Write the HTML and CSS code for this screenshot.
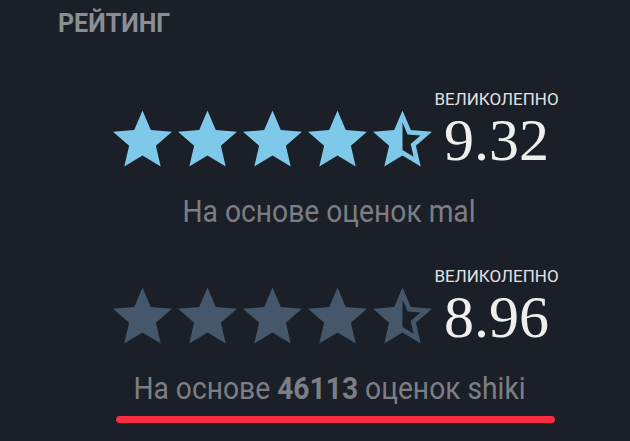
FILE: index.html
```html
<!DOCTYPE html>
<html lang="ru">
<head>
<meta charset="utf-8">
<link rel="stylesheet" href="styles.css">
</head>
<body>
<div class="panel">
  <h2 class="title">РЕЙТИНГ</h2>
  <div class="block">
    <div class="rating">
      <div class="stars stars-mal">
        <svg class="star" viewBox="2 2 20 19"><path d="M12 17.27L18.18 21l-1.64-7.03L22 9.24l-7.19-.61L12 2 9.19 8.63 2 9.24l5.46 4.73L5.82 21z"/></svg>
        <svg class="star" viewBox="2 2 20 19"><path d="M12 17.27L18.18 21l-1.64-7.03L22 9.24l-7.19-.61L12 2 9.19 8.63 2 9.24l5.46 4.73L5.82 21z"/></svg>
        <svg class="star" viewBox="2 2 20 19"><path d="M12 17.27L18.18 21l-1.64-7.03L22 9.24l-7.19-.61L12 2 9.19 8.63 2 9.24l5.46 4.73L5.82 21z"/></svg>
        <svg class="star" viewBox="2 2 20 19"><path d="M12 17.27L18.18 21l-1.64-7.03L22 9.24l-7.19-.61L12 2 9.19 8.63 2 9.24l5.46 4.73L5.82 21z"/></svg>
        <svg class="star" viewBox="2 2 20 19"><path d="M22 9.24l-7.19-.62L12 2 9.19 8.63 2 9.24l5.46 4.73L5.82 21 12 17.27 18.18 21l-1.63-7.03L22 9.24zM12 15.4V6.1l1.71 4.04 4.38.38-3.32 2.88 1 4.28L12 15.4z"/></svg>
      </div>
      <div class="score">
        <span class="label">ВЕЛИКОЛЕПНО</span>
        <span class="num">9.32</span>
      </div>
    </div>
    <p class="source"><span class="source-text">На основе оценок mal</span></p>
  </div>
  <div class="block">
    <div class="rating rating-second">
      <div class="stars stars-shiki">
        <svg class="star" viewBox="2 2 20 19"><path d="M12 17.27L18.18 21l-1.64-7.03L22 9.24l-7.19-.61L12 2 9.19 8.63 2 9.24l5.46 4.73L5.82 21z"/></svg>
        <svg class="star" viewBox="2 2 20 19"><path d="M12 17.27L18.18 21l-1.64-7.03L22 9.24l-7.19-.61L12 2 9.19 8.63 2 9.24l5.46 4.73L5.82 21z"/></svg>
        <svg class="star" viewBox="2 2 20 19"><path d="M12 17.27L18.18 21l-1.64-7.03L22 9.24l-7.19-.61L12 2 9.19 8.63 2 9.24l5.46 4.73L5.82 21z"/></svg>
        <svg class="star" viewBox="2 2 20 19"><path d="M12 17.27L18.18 21l-1.64-7.03L22 9.24l-7.19-.61L12 2 9.19 8.63 2 9.24l5.46 4.73L5.82 21z"/></svg>
        <svg class="star" viewBox="2 2 20 19"><path d="M22 9.24l-7.19-.62L12 2 9.19 8.63 2 9.24l5.46 4.73L5.82 21 12 17.27 18.18 21l-1.63-7.03L22 9.24zM12 15.4V6.1l1.71 4.04 4.38.38-3.32 2.88 1 4.28L12 15.4z"/></svg>
      </div>
      <div class="score">
        <span class="label">ВЕЛИКОЛЕПНО</span>
        <span class="num">8.96</span>
      </div>
    </div>
    <p class="source"><span class="source-text">На основе <b>46113</b> оценок shiki</span></p>
    <div class="underline"></div>
  </div>
</div>
</body>
</html>
```

FILE: styles.css
```css
html, body {
  margin: 0;
  padding: 0;
  background: #1b1f27;
  height: 100%;
}
.panel {
  width: 538px;
  padding: 0 32px 0 60px;
  font-family: Roboto, "Noto Sans", sans-serif;
}
.title {
  margin: 0 0 0 -2px;
  padding-top: 8px;
  font-size: 25px;
  line-height: 32px;
  font-weight: 700;
  color: #8b8e93;
}
.block {
  display: flex;
  flex-direction: column;
  align-items: center;
}
.rating {
  display: flex;
  align-items: flex-end;
  margin-top: 51px;
  margin-left: 14px;
}
.rating-second {
  margin-top: 38px;
}
.stars {
  display: flex;
  gap: 6px;
  padding-bottom: 3px;
}
.star {
  width: 59px;
  height: 57px;
  display: block;
}
.stars-mal .star { fill: #7ec8ea; }
.stars-shiki .star { fill: #45576a; }
.score {
  display: flex;
  flex-direction: column;
  align-items: center;
  margin-left: 2px;
}
.label {
  font-size: 17px;
  line-height: 16px;
  color: #e2e2e2;
}
.num {
  margin-top: 3px;
  font-family: "Liberation Serif", serif;
  font-size: 60px;
  line-height: 60px;
  color: #efefef;
}
.source {
  margin: 24px 0 0;
  font-size: 31px;
  line-height: 36px;
  color: #7b7f85;
  white-space: nowrap;
}
.source-text {
  display: inline-block;
  transform: scaleX(0.91);
}
.source b {
  font-weight: 700;
}
.underline {
  width: 439px;
  height: 7px;
  margin: 9px 0 0 13px;
  border-radius: 4px;
  background: #fb2c41;
}
```
